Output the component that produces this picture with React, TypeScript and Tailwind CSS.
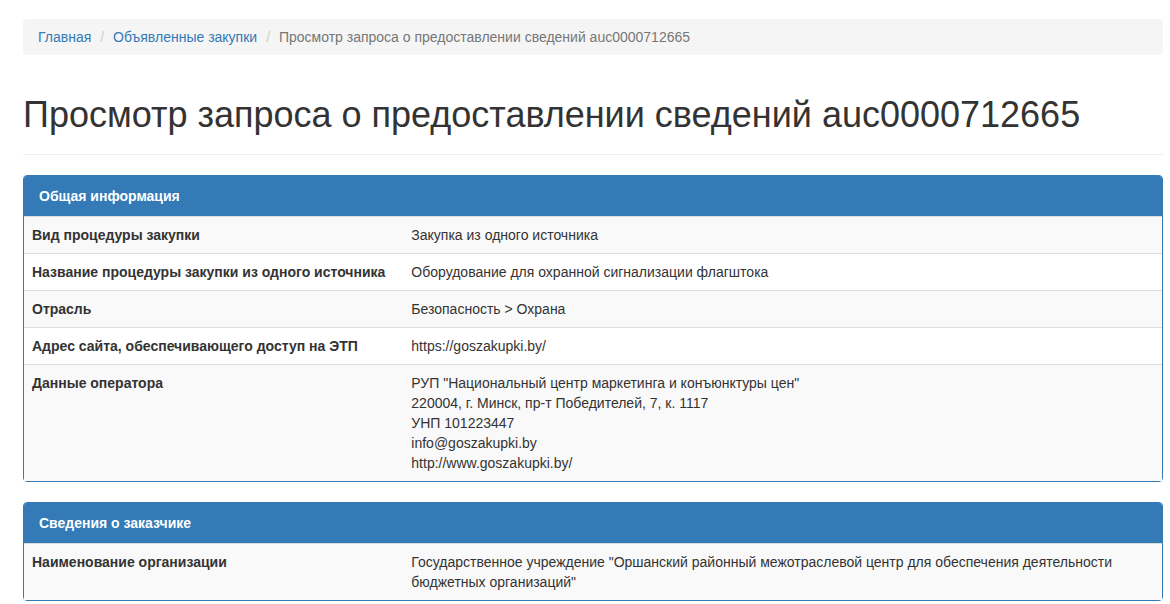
import React from "react";

const rows1: { label: string; value: React.ReactNode }[] = [
  { label: "Вид процедуры закупки", value: "Закупка из одного источника" },
  { label: "Название процедуры закупки из одного источника", value: "Оборудование для охранной сигнализации флагштока" },
  { label: "Отрасль", value: "Безопасность > Охрана" },
  { label: "Адрес сайта, обеспечивающего доступ на ЭТП", value: "https://goszakupki.by/" },
  {
    label: "Данные оператора",
    value: (
      <>
        РУП "Национальный центр маркетинга и конъюнктуры цен"
        <br />
        220004, г. Минск, пр-т Победителей, 7, к. 1117
        <br />
        УНП 101223447
        <br />
        info@goszakupki.by
        <br />
        http://www.goszakupki.by/
      </>
    ),
  },
];

const rows2: { label: string; value: React.ReactNode }[] = [
  {
    label: "Наименование организации",
    value: (
      <>
        Государственное учреждение "Оршанский районный межотраслевой центр для обеспечения деятельности
        <br />
        бюджетных организаций"
      </>
    ),
  },
];

function Panel({ title, rows }: { title: string; rows: { label: string; value: React.ReactNode }[] }) {
  return (
    <div className="mb-5 rounded-[4px] border border-[#337ab7] bg-white">
      <div className="rounded-t-[3px] bg-[#337ab7] px-[15px] py-[10px] text-[14px] font-bold leading-5 text-white">
        {title}
      </div>
      <table className="w-full border-collapse text-[14px] leading-5">
        <tbody>
          {rows.map((r, i) => (
            <tr key={i} className={i % 2 === 0 ? "bg-[#f9f9f9]" : "bg-white"}>
              <td className="w-1/3 border-t border-[#ddd] p-2 align-top font-bold text-[#333]">{r.label}</td>
              <td className="border-t border-[#ddd] p-2 align-top text-[#333]">{r.value}</td>
            </tr>
          ))}
        </tbody>
      </table>
    </div>
  );
}

function Sep() {
  return <li className="ml-1 px-[5px] text-[#ccc]">/{"\u00a0"}</li>;
}

export default function App() {
  return (
    <div
      className="h-[604px] overflow-hidden bg-white text-[14px] leading-5 text-[#333]"
      style={{ fontFamily: '"Liberation Sans", Arial, sans-serif' }}
    >
      <div className="ml-[23px] w-[1140px] pt-[19px]">
        <ol className="mb-5 flex rounded-[4px] bg-[#f5f5f5] px-[15px] py-2">
          <li className="text-[#337ab7]">Главная</li>
          <Sep />
          <li className="text-[#337ab7]">Объявленные закупки</li>
          <Sep />
          <li className="text-[#777]">Просмотр запроса о предоставлении сведений auc0000712665</li>
        </ol>
        <div className="mb-5 mt-10 border-b border-[#eee] pb-[9px]">
          <h1 className="mb-[10px] text-[36px] font-normal leading-[1.1] text-[#333]">
            Просмотр запроса о предоставлении сведений auc0000712665
          </h1>
        </div>
        <Panel title="Общая информация" rows={rows1} />
        <Panel title="Сведения о заказчике" rows={rows2} />
      </div>
    </div>
  );
}
